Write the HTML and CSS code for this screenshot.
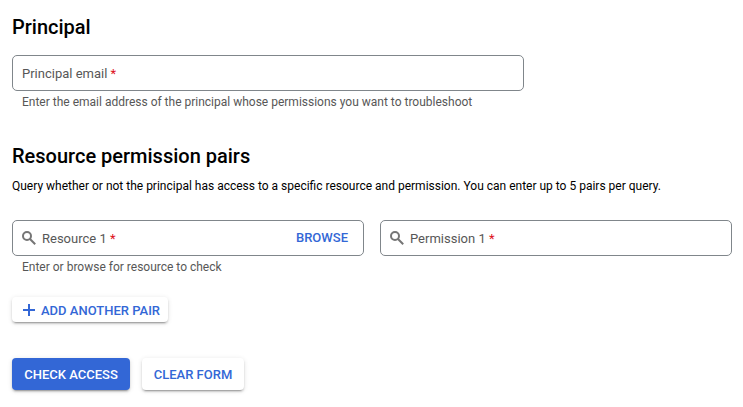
FILE: index.html
```html
<!DOCTYPE html>
<html lang="en">
<head>
<meta charset="utf-8">
<title>Policy Troubleshooter</title>
<link rel="stylesheet" href="styles.css">
</head>
<body>
<main class="form">
  <section class="principal">
    <h2>Principal</h2>
    <div class="field field-email"><span class="label">Principal email <b>*</b></span></div>
    <p class="hint">Enter the email address of the principal whose permissions you want to troubleshoot</p>
  </section>
  <section class="pairs">
    <h2>Resource permission pairs</h2>
    <p class="description">Query whether or not the principal has access to a specific resource and permission. You can enter up to 5 pairs per query.</p>
    <div class="pair">
      <div>
        <div class="field">
          <svg class="search" viewBox="0 0 14 14"><circle cx="5" cy="5" r="4"/><path d="M8 8l5.200 5.200"/></svg>
          <span class="label">Resource 1 <b>*</b></span>
          <span class="browse">BROWSE</span>
        </div>
        <p class="hint">Enter or browse for resource to check</p>
      </div>
      <div class="field">
        <svg class="search" viewBox="0 0 14 14"><circle cx="5" cy="5" r="4"/><path d="M8 8l5.200 5.200"/></svg>
        <span class="label">Permission 1 <b>*</b></span>
      </div>
    </div>
  </section>
  <button class="button add"><svg class="plus" viewBox="0 0 12 12"><path d="M6 0v12M0 6h12"/></svg>ADD ANOTHER PAIR</button>
  <div class="actions">
    <button class="button primary">CHECK ACCESS</button>
    <button class="button clear">CLEAR FORM</button>
  </div>
</main>
</body>
</html>
```
FILE: styles.css
```css
* { box-sizing: border-box; }
body { margin: 0; background: #fff; color: #000; font: 12px/16px Roboto, sans-serif; }
.form { padding: 15px 11px 16px 12px; }
h2 { margin: 0; font-size: 20px; line-height: 24px; font-weight: 500; }
p { margin: 0; }
.field { display: flex; align-items: center; height: 36px; padding: 0 15px 0 9px; border: 1px solid #80868b; border-radius: 5px; color: #575757; }
.field-email { width: 512px; margin-top: 16px; }
.label { padding-top: 2px; font-size: 13px; line-height: 20px; }
.label b { color: #dd1020; font-weight: 400; }
.hint { padding: 3px 10px 0; color: #575757; }
.pairs { margin-top: 34px; }
.description { margin-top: 10px; }
.pair { display: grid; grid-template-columns: 352px 352px; gap: 16px; align-items: start; margin-top: 26px; }
.search { width: 14px; height: 14px; margin-right: 6px; fill: none; stroke: #757575; stroke-width: 2; }
.browse { margin-left: auto; color: #3367d6; font-size: 13px; font-weight: 500; }
.button { display: flex; align-items: center; justify-content: center; padding: 2px 0 0; border: 0; border-radius: 4px; background: #fff; color: #3367d6; font: 500 13px/16px Roboto, sans-serif; box-shadow: 0 3px 1px -2px rgba(0,0,0,.2), 0 2px 2px rgba(0,0,0,.14), 0 1px 5px rgba(0,0,0,.12); }
.add { justify-content: flex-start; width: 156px; height: 25px; margin-top: 22px; padding: 2px 0 0 11px; }
.plus { width: 12px; height: 12px; margin: -1px 6px 0 0; fill: none; stroke: #3367d6; stroke-width: 2; }
.actions { display: flex; gap: 12px; margin-top: 36px; }
.primary { width: 118px; height: 32px; background: #3367d6; color: #fff; }
.clear { width: 102px; height: 32px; }
```
